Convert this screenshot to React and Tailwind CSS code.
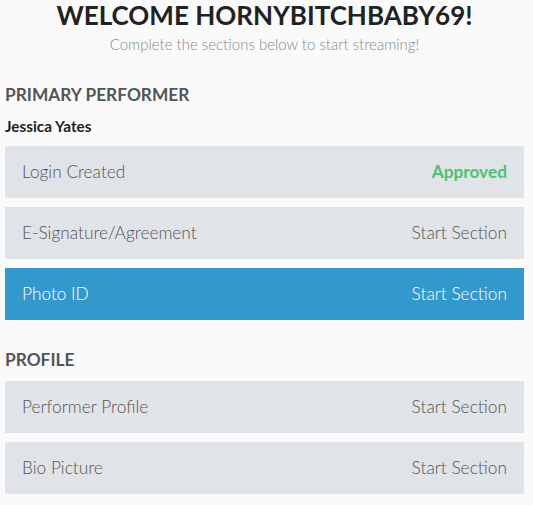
export default function App() {
  const Row = ({ label, right, active, approved }) => (
    <div
      className={`flex h-[52px] items-center justify-between px-[17px] text-[17.3px] font-light ${
        active ? "bg-[#3399cc] text-white" : "bg-[#e0e3e7] text-[#555]"
      }`}
    >
      <span>{label}</span>
      <span className={approved ? "font-bold text-[#4cc271]" : ""}>{right}</span>
    </div>
  );
  return (
    <div className="min-h-[505px] bg-[#fafafa] font-['Lato',sans-serif]">
      <div className="w-[519px] ml-[5px]">
        <div className="text-center">
          <h1 className="text-[26px] font-bold leading-[30px] text-[#222]">WELCOME HORNYBITCHBABY69!</h1>
          <p className="text-[15px] font-light leading-[28px] text-[#888]">Complete the sections below to start streaming!</p>
        </div>
        <h2 className="mt-[25px] text-[17.3px] font-bold leading-[24px] text-[#555]">PRIMARY PERFORMER</h2>
        <div className="mt-[9px] text-[15.3px] font-bold leading-[20px] text-[#222]">Jessica Yates</div>
        <div className="mt-[10px] flex flex-col gap-[9px]">
          <Row label="Login Created" right="Approved" approved />
          <Row label="E-Signature/Agreement" right="Start Section" />
          <Row label="Photo ID" right="Start Section" active />
        </div>
        <h2 className="mt-[28px] text-[17.3px] font-bold leading-[24px] text-[#555]">PROFILE</h2>
        <div className="mt-[9px] flex flex-col gap-[9px]">
          <Row label="Performer Profile" right="Start Section" />
          <Row label="Bio Picture" right="Start Section" />
        </div>
      </div>
    </div>
  );
}
